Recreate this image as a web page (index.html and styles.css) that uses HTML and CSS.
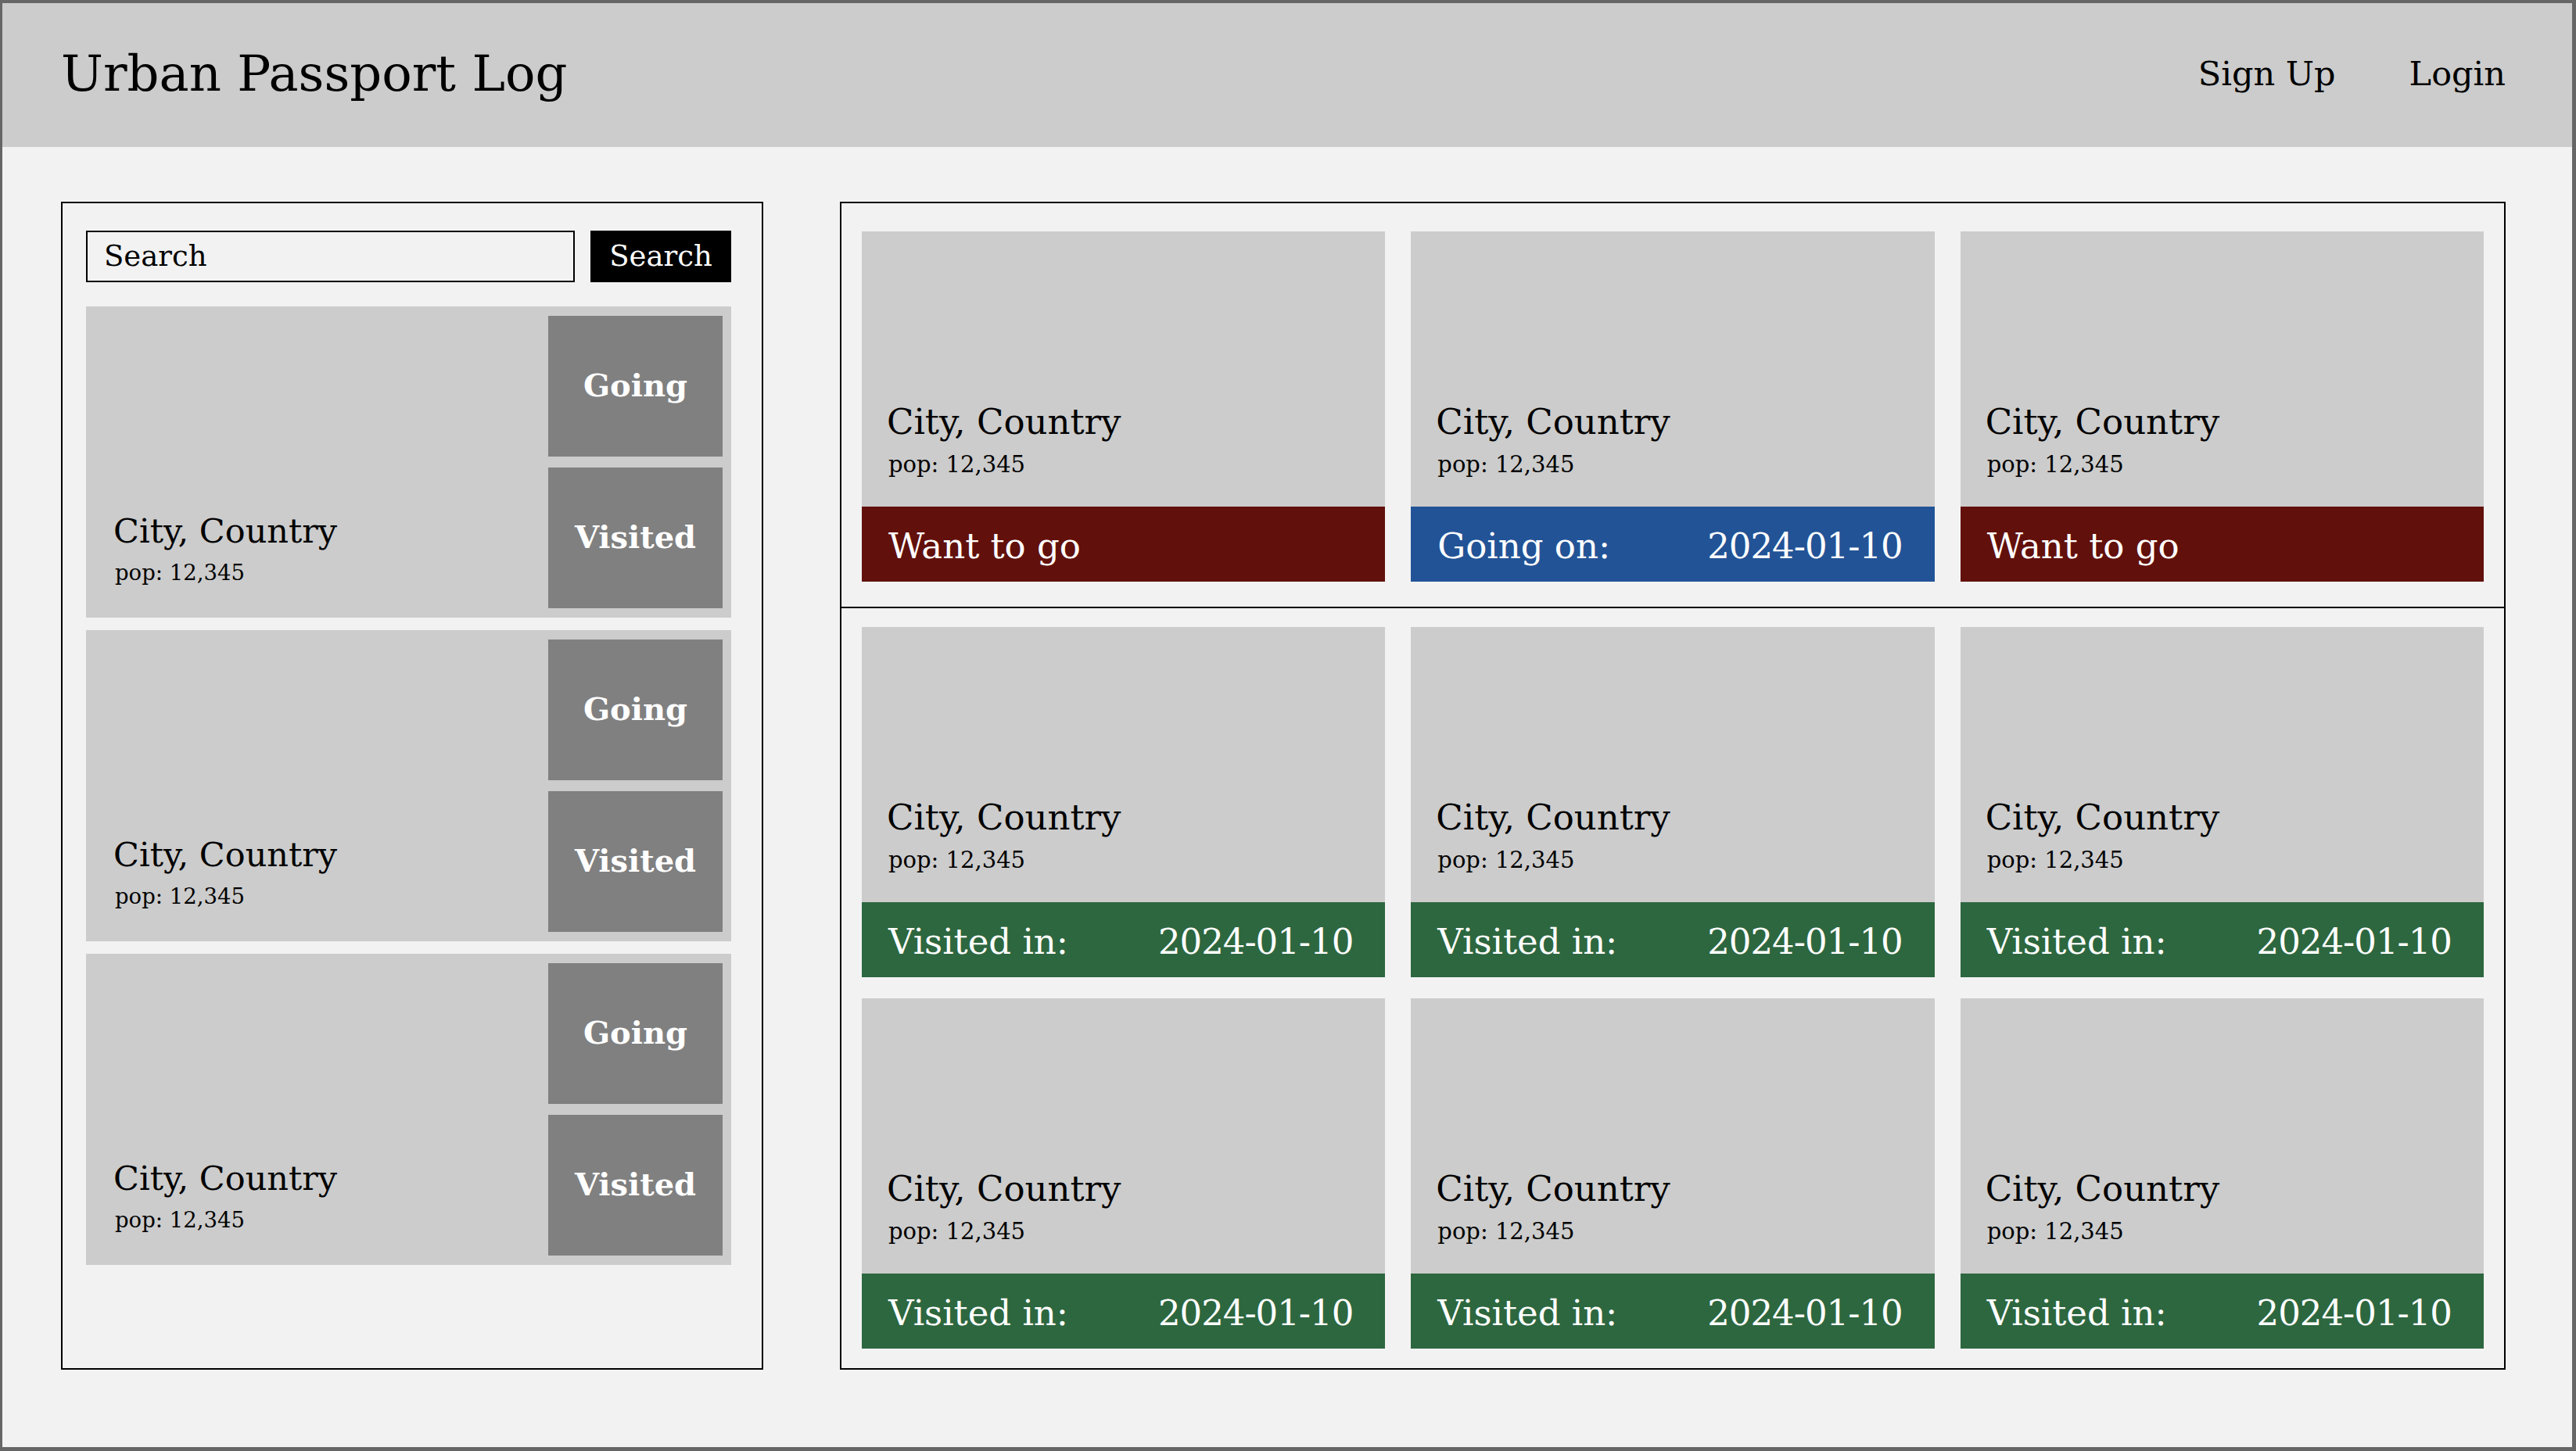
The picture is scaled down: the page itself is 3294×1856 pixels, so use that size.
FILE: index.html
```html
<!DOCTYPE html>
<html lang="en">
<head>
<meta charset="utf-8">
<title>Urban Passport Log</title>
<link rel="stylesheet" href="styles.css">
</head>
<body>
<div class="page">
  <header class="topbar">
    <h1 class="brand">Urban Passport Log</h1>
    <nav class="nav">
      <a class="nav-link" href="#">Sign Up</a>
      <a class="nav-link" href="#">Login</a>
    </nav>
  </header>
  <main class="content">
    <aside class="sidebar">
      <form class="search">
        <input class="search-input" type="text" placeholder="Search">
        <button class="search-btn" type="button">Search</button>
      </form>
      <ul class="results">
        <li class="result">
          <div class="result-info">
            <div class="result-city">City, Country</div>
            <div class="result-pop">pop: 12,345</div>
          </div>
          <div class="result-actions">
            <button class="action" type="button">Going</button>
            <button class="action" type="button">Visited</button>
          </div>
        </li>
        <li class="result">
          <div class="result-info">
            <div class="result-city">City, Country</div>
            <div class="result-pop">pop: 12,345</div>
          </div>
          <div class="result-actions">
            <button class="action" type="button">Going</button>
            <button class="action" type="button">Visited</button>
          </div>
        </li>
        <li class="result">
          <div class="result-info">
            <div class="result-city">City, Country</div>
            <div class="result-pop">pop: 12,345</div>
          </div>
          <div class="result-actions">
            <button class="action" type="button">Going</button>
            <button class="action" type="button">Visited</button>
          </div>
        </li>
      </ul>
    </aside>
    <section class="board">
      <div class="board-section board-upcoming">
        <div class="card">
          <div class="card-body">
            <div class="card-city">City, Country</div>
            <div class="card-pop">pop: 12,345</div>
          </div>
          <div class="card-status status-want"><span>Want to go</span></div>
        </div>
        <div class="card">
          <div class="card-body">
            <div class="card-city">City, Country</div>
            <div class="card-pop">pop: 12,345</div>
          </div>
          <div class="card-status status-going"><span>Going on:</span><span class="date">2024-01-10</span></div>
        </div>
        <div class="card">
          <div class="card-body">
            <div class="card-city">City, Country</div>
            <div class="card-pop">pop: 12,345</div>
          </div>
          <div class="card-status status-want"><span>Want to go</span></div>
        </div>
      </div>
      <div class="board-section board-visited">
        <div class="card">
          <div class="card-body">
            <div class="card-city">City, Country</div>
            <div class="card-pop">pop: 12,345</div>
          </div>
          <div class="card-status status-visited"><span>Visited in:</span><span class="date">2024-01-10</span></div>
        </div>
        <div class="card">
          <div class="card-body">
            <div class="card-city">City, Country</div>
            <div class="card-pop">pop: 12,345</div>
          </div>
          <div class="card-status status-visited"><span>Visited in:</span><span class="date">2024-01-10</span></div>
        </div>
        <div class="card">
          <div class="card-body">
            <div class="card-city">City, Country</div>
            <div class="card-pop">pop: 12,345</div>
          </div>
          <div class="card-status status-visited"><span>Visited in:</span><span class="date">2024-01-10</span></div>
        </div>
        <div class="card">
          <div class="card-body">
            <div class="card-city">City, Country</div>
            <div class="card-pop">pop: 12,345</div>
          </div>
          <div class="card-status status-visited"><span>Visited in:</span><span class="date">2024-01-10</span></div>
        </div>
        <div class="card">
          <div class="card-body">
            <div class="card-city">City, Country</div>
            <div class="card-pop">pop: 12,345</div>
          </div>
          <div class="card-status status-visited"><span>Visited in:</span><span class="date">2024-01-10</span></div>
        </div>
        <div class="card">
          <div class="card-body">
            <div class="card-city">City, Country</div>
            <div class="card-pop">pop: 12,345</div>
          </div>
          <div class="card-status status-visited"><span>Visited in:</span><span class="date">2024-01-10</span></div>
        </div>
      </div>
    </section>
  </main>
</div>
</body>
</html>
```

FILE: styles.css
```css
* {
  box-sizing: border-box;
}

html, body {
  margin: 0;
  padding: 0;
}

body {
  font-family: "Roboto Slab", "DejaVu Serif", serif;
  color: #000;
  background: #f2f2f2;
}

.page {
  width: 3294px;
  height: 1856px;
  border-style: solid;
  border-color: #666;
  border-width: 4px 5px 5px 3px;
  background: #f2f2f2;
  display: flex;
  flex-direction: column;
}

/* ---------- header ---------- */
.topbar {
  height: 184px;
  flex: 0 0 auto;
  background: #cccccc;
  display: flex;
  align-items: center;
  justify-content: space-between;
  padding: 0 85px 4px 75px;
}

.brand {
  margin: 0;
  font-size: 64px;
  font-weight: normal;
  line-height: 1;
  white-space: nowrap;
}

.nav {
  display: flex;
  gap: 94px;
}

.nav-link {
  font-size: 43px;
  line-height: 1;
  color: #000;
  text-decoration: none;
}

/* ---------- content ---------- */
.content {
  flex: 1 1 auto;
  display: flex;
  gap: 98px;
  padding: 70px 85px 99px 75px;
  min-height: 0;
}

/* ---------- sidebar ---------- */
.sidebar {
  width: 898px;
  flex: 0 0 auto;
  border: 2px solid #000;
  padding: 35px 39px 0 30px;
}

.search {
  display: flex;
  gap: 20px;
  height: 66px;
  margin: 0;
}

.search-input {
  flex: 1 1 auto;
  min-width: 0;
  height: 66px;
  border: 2px solid #000;
  background: transparent;
  font-family: "Roboto Slab", "DejaVu Serif", serif;
  font-size: 37px;
  color: #000;
  padding: 0 0 2px 21px;
  outline: none;
}

.search-input::placeholder {
  color: #000;
  opacity: 1;
}

.search-btn {
  width: 180px;
  height: 66px;
  border: 0;
  background: #000;
  color: #fff;
  font-family: "Roboto Slab", "DejaVu Serif", serif;
  font-size: 37px;
  padding: 0 0 2px;
}

.results {
  list-style: none;
  margin: 31px 0 0;
  padding: 0;
  display: flex;
  flex-direction: column;
  gap: 16px;
}

.result {
  height: 398px;
  background: #cccccc;
  display: flex;
  padding: 12px 11px 12px 35px;
}

.result-info {
  flex: 1 1 auto;
  display: flex;
  flex-direction: column;
  justify-content: flex-end;
  padding-bottom: 32px;
}

.result-city {
  font-size: 43px;
  line-height: 1;
  margin-bottom: 18px;
}

.result-pop {
  font-size: 27.5px;
  line-height: 1;
  padding-left: 2px;
}

.result-actions {
  width: 223px;
  flex: 0 0 auto;
  display: flex;
  flex-direction: column;
  gap: 14px;
}

.action {
  flex: 1 1 0;
  border: 0;
  background: #808080;
  color: #fff;
  font-family: "Roboto Slab", "DejaVu Serif", serif;
  font-weight: bold;
  font-size: 40px;
  line-height: 1;
  padding: 0 0 2px;
}

/* ---------- board ---------- */
.board {
  flex: 1 1 auto;
  border: 2px solid #000;
  display: flex;
  flex-direction: column;
}

.board-section {
  display: grid;
  grid-template-columns: repeat(3, 1fr);
  column-gap: 33px;
  row-gap: 27px;
  grid-auto-rows: 448px;
  padding-left: 26px;
  padding-right: 26px;
}

.board-upcoming {
  padding-top: 36px;
  padding-bottom: 32px;
  border-bottom: 2px solid #000;
}

.board-visited {
  padding-top: 24px;
  padding-bottom: 25px;
}

.card {
  background: #cccccc;
  display: flex;
  flex-direction: column;
}

.card-body {
  flex: 1 1 auto;
  display: flex;
  flex-direction: column;
  justify-content: flex-end;
  padding: 0 0 39px 32px;
}

.card-city {
  font-size: 45px;
  line-height: 1;
  margin-bottom: 18px;
}

.card-pop {
  font-size: 29px;
  line-height: 1;
  padding-left: 2px;
}

.card-status {
  height: 96px;
  flex: 0 0 auto;
  display: flex;
  align-items: center;
  justify-content: space-between;
  padding: 4px 41px 0 34px;
  color: #fff;
  font-size: 45px;
  line-height: 1;
}

.date {
  letter-spacing: -1px;
}

.status-want {
  background: #62100b;
}

.status-going {
  background: #225396;
}

.status-visited {
  background: #2d673f;
}
```
